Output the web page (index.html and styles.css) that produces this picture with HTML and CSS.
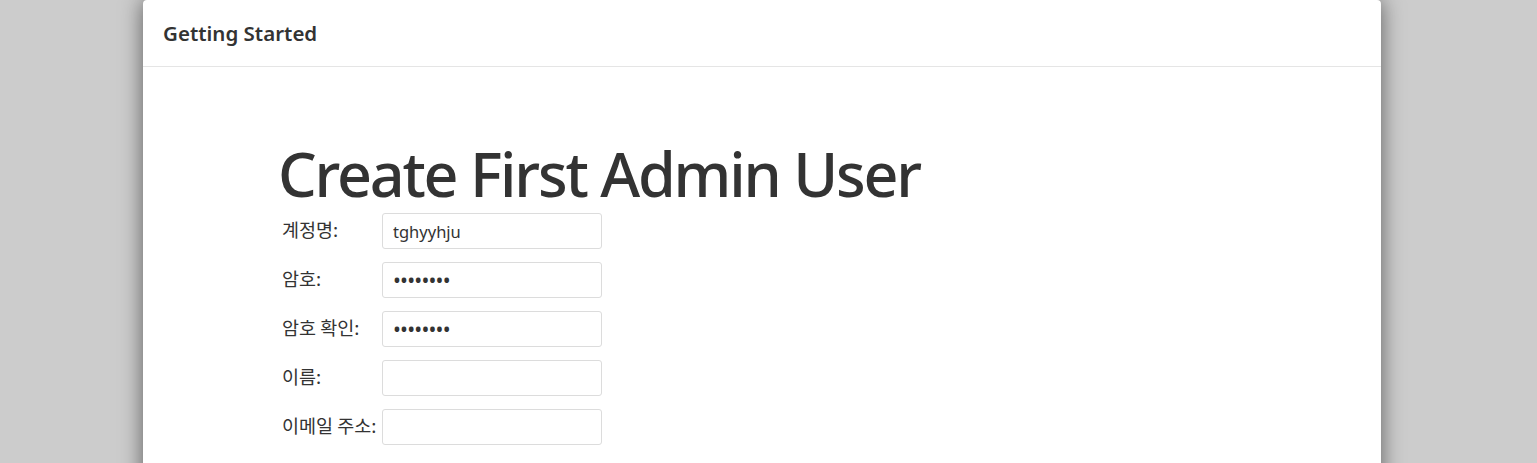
FILE: index.html
```html
<!DOCTYPE html>
<html>
<head>
<meta charset="utf-8">
<link rel="stylesheet" href="styles.css">
</head>
<body>
<div class="panel">
  <div class="panel-header">Getting Started</div>
  <div class="panel-body">
    <h1 class="title">Create First Admin User</h1>
    <form class="form">
      <div class="row"><label class="label">계정명:</label><input class="input" type="text" value="tghyyhju"></div>
      <div class="row"><label class="label">암호:</label><input class="input pw" type="password" value="abcdefgh"></div>
      <div class="row"><label class="label">암호 확인:</label><input class="input pw" type="password" value="abcdefgh"></div>
      <div class="row"><label class="label">이름:</label><input class="input" type="text" value=""></div>
      <div class="row"><label class="label">이메일 주소:</label><input class="input" type="text" value=""></div>
    </form>
  </div>
</div>
</body>
</html>
```
FILE: styles.css
```css
html, body {
  margin: 0;
  padding: 0;
  height: 100%;
  overflow: hidden;
}
body {
  background: #cccccc;
  font-family: "Noto Sans", "Noto Sans CJK KR", sans-serif;
  color: #333333;
}
.panel {
  margin-left: 143px;
  width: 1238px;
  height: 600px;
  background: #ffffff;
  border-radius: 4px 4px 0 0;
  box-shadow: 0 0 22px rgba(0, 0, 0, 0.55);
}
.panel-header {
  height: 67px;
  box-sizing: border-box;
  border-bottom: 1px solid #e5e5e5;
  padding: 0 20px 1px;
  display: flex;
  align-items: center;
  font-size: 20.5px;
  font-weight: 600;
  color: #333333;
}
.panel-body {
  padding: 68px 0 0 135px;
}
.title {
  margin: 0;
  font-size: 61px;
  font-weight: 500;
  letter-spacing: -2.2px;
  line-height: 78px;
  color: #333333;
}
.form {
  margin: 0;
  display: flex;
  flex-direction: column;
  gap: 13px;
}
.row {
  display: flex;
  align-items: flex-start;
  padding-left: 4px;
}
.label {
  width: 100px;
  font-family: "Noto Sans CJK KR", "Noto Sans", sans-serif;
  font-size: 18.5px;
  line-height: 22px;
  padding-top: 5px;
  color: #333333;
  white-space: nowrap;
}
.input {
  width: 220px;
  height: 36px;
  box-sizing: border-box;
  border: 1px solid #dcdcdc;
  border-radius: 3px;
  padding: 0 10px;
  font-family: "Noto Sans", sans-serif;
  font-size: 16.5px;
  color: #333333;
  margin: 0;
  outline: none;
}
.pw {
  font-size: 21px;
  letter-spacing: -0.8px;
}
```
